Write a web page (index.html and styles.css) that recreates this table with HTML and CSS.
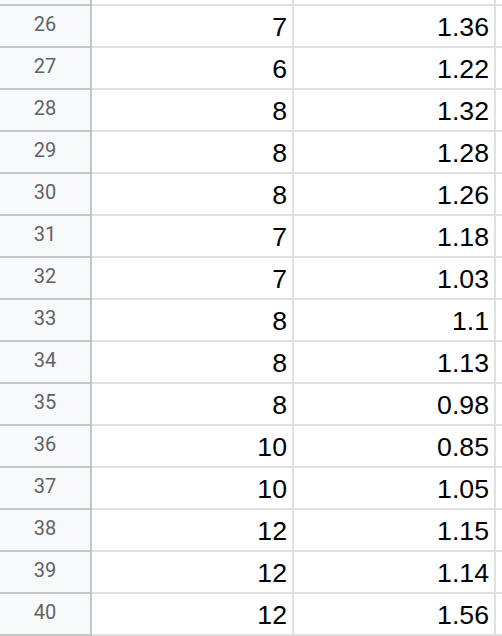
FILE: index.html
```html
<!DOCTYPE html>
<html>
<head>
<meta charset="utf-8">
<link rel="stylesheet" href="styles.css">
</head>
<body>
<div class="sheet">
  <div class="hdr stub"></div><div class="cell stub"></div><div class="cell stub"></div><div class="cell stub last"></div>
  <div class="hdr">26</div><div class="cell">7</div><div class="cell">1.36</div><div class="cell last"></div>
  <div class="hdr">27</div><div class="cell">6</div><div class="cell">1.22</div><div class="cell last"></div>
  <div class="hdr">28</div><div class="cell">8</div><div class="cell">1.32</div><div class="cell last"></div>
  <div class="hdr">29</div><div class="cell">8</div><div class="cell">1.28</div><div class="cell last"></div>
  <div class="hdr">30</div><div class="cell">8</div><div class="cell">1.26</div><div class="cell last"></div>
  <div class="hdr">31</div><div class="cell">7</div><div class="cell">1.18</div><div class="cell last"></div>
  <div class="hdr">32</div><div class="cell">7</div><div class="cell">1.03</div><div class="cell last"></div>
  <div class="hdr">33</div><div class="cell">8</div><div class="cell">1.1</div><div class="cell last"></div>
  <div class="hdr">34</div><div class="cell">8</div><div class="cell">1.13</div><div class="cell last"></div>
  <div class="hdr">35</div><div class="cell">8</div><div class="cell">0.98</div><div class="cell last"></div>
  <div class="hdr">36</div><div class="cell">10</div><div class="cell">0.85</div><div class="cell last"></div>
  <div class="hdr">37</div><div class="cell">10</div><div class="cell">1.05</div><div class="cell last"></div>
  <div class="hdr">38</div><div class="cell">12</div><div class="cell">1.15</div><div class="cell last"></div>
  <div class="hdr">39</div><div class="cell">12</div><div class="cell">1.14</div><div class="cell last"></div>
  <div class="hdr">40</div><div class="cell">12</div><div class="cell">1.56</div><div class="cell last"></div>
</div>
</body>
</html>
```
FILE: styles.css
```css
html, body {
  margin: 0;
  padding: 0;
  background: #ffffff;
}
.sheet {
  display: grid;
  grid-template-columns: 92px 202px 202px 1fr;
  grid-template-rows: 6px repeat(15, 42px);
  width: 502px;
  height: 636px;
  overflow: hidden;
}
.hdr {
  box-sizing: border-box;
  background: #f8f9fa;
  border-right: 2px solid #c4c7c5;
  border-bottom: 2px solid #c4c7c5;
  font-family: Roboto, "Liberation Sans", sans-serif;
  font-size: 20px;
  line-height: 24px;
  color: #5f6368;
  text-align: center;
  padding-top: 6px;
}
.cell {
  box-sizing: border-box;
  border-right: 2px solid #e1e1e1;
  border-bottom: 2px solid #e1e1e1;
  font-family: "Liberation Sans", Arial, sans-serif;
  font-size: 26.67px;
  line-height: 30px;
  color: #000000;
  text-align: right;
  padding: 6px 5px 0 0;
}
.stub {
  padding: 0;
}
.last {
  border-right: none;
}
```
